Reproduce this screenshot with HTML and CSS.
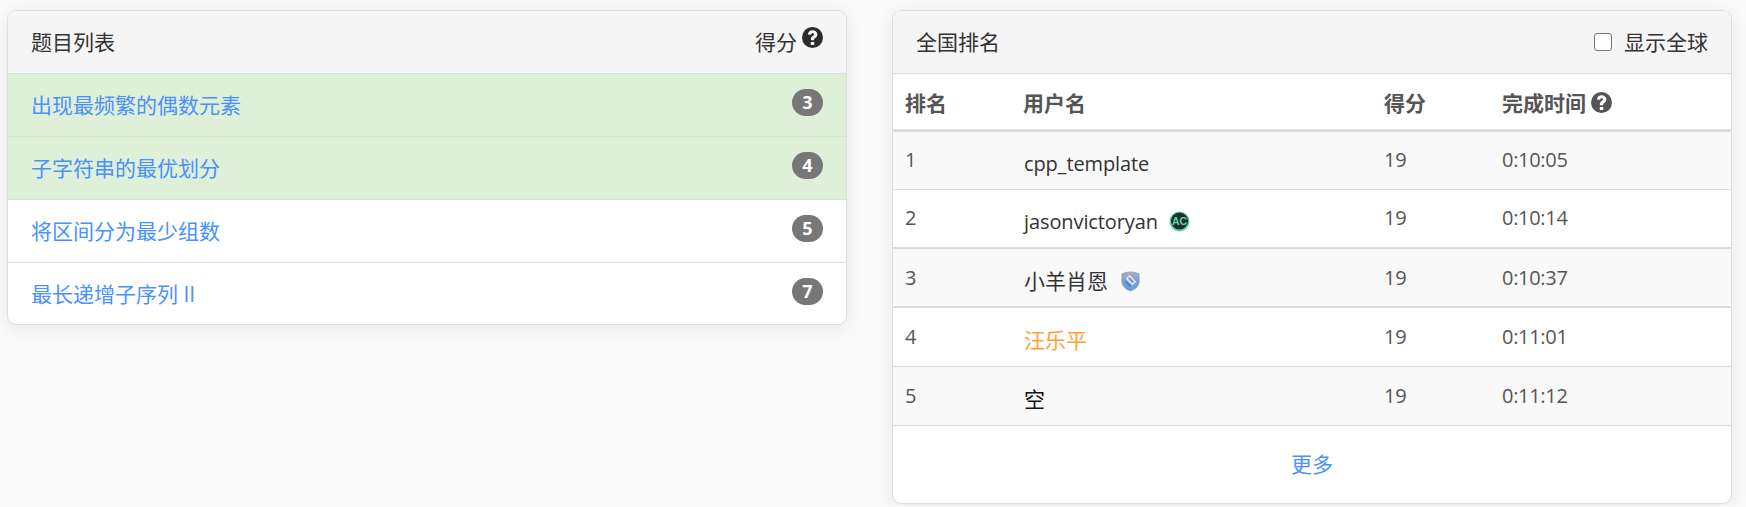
FILE: index.html
```html
<!DOCTYPE html>
<html lang="zh">
<head>
    <meta charset="UTF-8">
    <title>题目列表</title>
    <link rel="stylesheet" href="styles.css">
</head>
<body>
    <div class="container">
        <div class="panel">
            <div class="panel-heading">
                <span>题目列表</span>
                <span class="score-title">得分
                    <svg class="help help-dark" viewBox="0 0 24 24"><use href="#help-icon"/></svg>
                </span>
            </div>
            <ul class="problem-list">
                <li class="solved"><a href="#">出现最频繁的偶数元素</a><span class="badge">3</span></li>
                <li class="solved"><a href="#">子字符串的最优划分</a><span class="badge">4</span></li>
                <li><a href="#">将区间分为最少组数</a><span class="badge">5</span></li>
                <li><a href="#">最长递增子序列 II</a><span class="badge">7</span></li>
            </ul>
        </div>

        <div class="panel">
            <div class="panel-heading">
                <span>全国排名</span>
                <label class="global-toggle"><input type="checkbox">显示全球</label>
            </div>
            <table class="rank-table">
                <colgroup>
                    <col class="col-rank"><col class="col-user"><col class="col-score"><col>
                </colgroup>
                <thead>
                    <tr>
                        <th>排名</th>
                        <th>用户名</th>
                        <th>得分</th>
                        <th>完成时间 <svg class="help help-grey" viewBox="0 0 24 24"><use href="#help-icon"/></svg></th>
                    </tr>
                </thead>
                <tbody>
                    <tr class="striped">
                        <td>1</td><td class="user latin">cpp_template</td><td>19</td><td>0:10:05</td>
                    </tr>
                    <tr class="thick">
                        <td>2</td>
                        <td class="user latin">jasonvictoryan
                            <svg class="medal medal-ac" viewBox="0 0 22 22">
                                <circle cx="11" cy="11" r="10.5" fill="#5fd3a8"/>
                                <circle cx="11" cy="10.5" r="9" fill="#20302d"/>
                                <text x="11" y="14.5" class="medal-text">AC</text>
                            </svg>
                        </td>
                        <td>19</td><td>0:10:14</td>
                    </tr>
                    <tr class="striped thick">
                        <td>3</td>
                        <td class="user">小羊肖恩
                            <svg class="medal" viewBox="0 0 20 22">
                                <defs>
                                    <linearGradient id="shield" x1="0" y1="0" x2="0" y2="1">
                                        <stop offset="0" stop-color="#a9b0bb"/>
                                        <stop offset="0.45" stop-color="#7f9fd0"/>
                                        <stop offset="1" stop-color="#5c9cf0"/>
                                    </linearGradient>
                                </defs>
                                <path d="M1 3 Q10 -1 19 3 L19 12 Q18 18 10 21 Q2 18 1 12 Z" fill="url(#shield)" stroke="#8e98a6" stroke-width="0.8"/>
                                <path d="M6 8 L9 5 L15 11 L12 14 Z" fill="none" stroke="#dfe6f0" stroke-width="1.6"/>
                                <path d="M5 11 L10 16" stroke="#4f6f9f" stroke-width="1.2"/>
                            </svg>
                        </td>
                        <td>19</td><td>0:10:37</td>
                    </tr>
                    <tr>
                        <td>4</td><td class="user orange">汪乐平</td><td>19</td><td>0:11:01</td>
                    </tr>
                    <tr class="striped">
                        <td>5</td><td class="user black">空</td><td>19</td><td>0:11:12</td>
                    </tr>
                </tbody>
            </table>
            <div class="more"><a href="#">更多</a></div>
        </div>
    </div>

    <svg class="icon-defs" aria-hidden="true">
        <symbol id="help-icon" viewBox="0 0 24 24">
            <path fill="currentColor" fill-rule="evenodd" d="M12 0a12 12 0 1 0 0 24a12 12 0 1 0 0-24z M10 17h4v3.5h-4z M6.6 8.6C7 5.6 9.2 3.8 12.2 3.8c3 0 5.4 2 5.4 4.7c0 2.2-1.2 3.2-2.5 4.1c-.9.6-1.2 1-1.2 1.9v.5h-3.8v-.9c0-1.9.8-2.9 2.1-3.8c.9-.6 1.5-1 1.5-1.8c0-.9-.7-1.4-1.6-1.4c-1 0-1.7.6-1.9 1.8z"/>
        </symbol>
    </svg>
</body>
</html>
```

FILE: styles.css
```css
body {
    font-family: "Open Sans", "Noto Sans CJK SC", sans-serif;
    font-size: 21px;
    line-height: 30px;
    margin: 0;
    padding: 10px 14px 2px 7px;
    color: #333;
    background-color: #fafafa;
}
a {
    color: #4a90ff;
    text-decoration: none;
}
.container {
    display: flex;
    align-items: flex-start;
    gap: 45px;
}
.panel {
    width: 840px;
    box-sizing: border-box;
    background-color: white;
    border: 1px solid #ddd;
    border-radius: 9px;
    box-shadow: 0 3px 18px rgba(0,0,0,0.08);
    overflow: hidden;
}
.panel-heading {
    height: 63px;
    box-sizing: border-box;
    padding: 0 23px 0 23px;
    display: flex;
    align-items: center;
    justify-content: space-between;
    background-color: #f5f5f5;
    border-bottom: 1.5px solid #ddd;
}
.score-title {
    display: flex;
    gap: 5px;
}
.help {
    width: 21px;
    height: 21px;
}
.help-dark {
    color: #2b2b2b;
    margin-top: 0;
}
.help-grey {
    color: #555;
    vertical-align: -2px;
}
.icon-defs {
    display: none;
}
.problem-list {
    list-style: none;
    margin: 0;
    padding: 0;
}
.problem-list li {
    height: 63px;
    box-sizing: border-box;
    padding: 0 23px 0 23px;
    display: flex;
    align-items: center;
    justify-content: space-between;
    border-bottom: 1.5px solid #ddd;
}
.problem-list li:last-child {
    border-bottom: none;
    height: 61px;
}
.problem-list .solved {
    background-color: #dff0d8;
}
.badge {
    width: 31px;
    height: 27px;
    margin-bottom: 5px;
    border-radius: 14px;
    background-color: #777;
    color: white;
    font-size: 18px;
    font-weight: bold;
    line-height: 27px;
    text-align: center;
}
.global-toggle {
    display: flex;
    align-items: center;
    gap: 12px;
}
.global-toggle input {
    appearance: none;
    width: 18px;
    height: 18px;
    margin: 0;
    background-color: white;
    border: 1.5px solid #767676;
    border-radius: 3px;
}
.rank-table {
    width: 100%;
    table-layout: fixed;
    border-collapse: collapse;
    color: #555;
}
.col-rank {
    width: 118px;
}
.col-user {
    width: 361px;
}
.col-score {
    width: 118px;
}
.rank-table th {
    height: 56px;
    padding: 3px 12px 0;
    box-sizing: border-box;
    text-align: left;
    font-weight: bold;
    border-bottom: 3px solid #ddd;
}
.rank-table td {
    height: 59px;
    padding: 0 12px 0;
    box-sizing: border-box;
    border-bottom: 1.5px solid #ddd;
    font-size: 20px;
    letter-spacing: -0.3px;
}
.rank-table .thick td {
    border-bottom-width: 2px;
}
.rank-table .striped {
    background-color: #f9f9f9;
}
.rank-table .user {
    color: #333;
    padding: 7px 12px 0 13px;
    font-size: 21px;
    letter-spacing: 0;
}
.rank-table .latin {
    font-size: 20px;
    letter-spacing: -0.1px;
}
.rank-table .orange {
    color: #ffa033;
}
.rank-table .black {
    color: #111;
}
.medal {
    width: 21px;
    height: 21px;
    margin-left: 7px;
    vertical-align: -3px;
}
.medal-ac {
    margin-left: 6px;
}
.medal-text {
    font-family: "Liberation Sans", sans-serif;
    font-size: 11px;
    font-weight: bold;
    fill: #5fd3a8;
    text-anchor: middle;
}
.more {
    height: 77px;
    display: flex;
    align-items: center;
    justify-content: center;
}
```
